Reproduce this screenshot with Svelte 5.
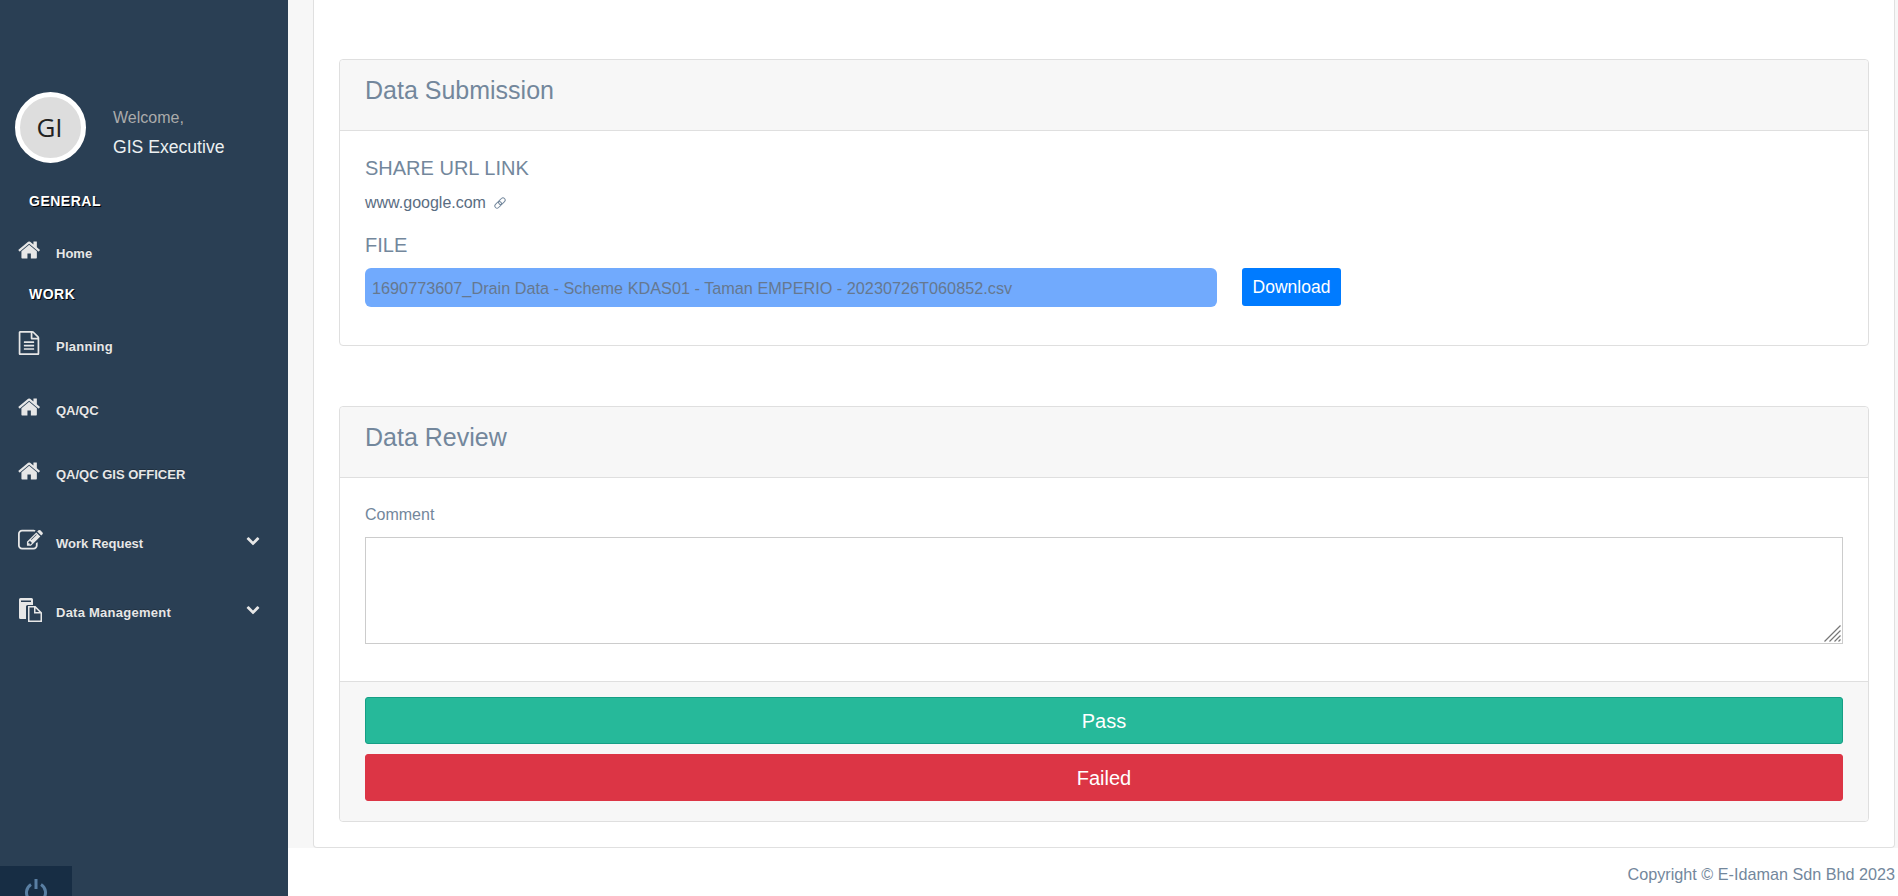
<script>
  const home = 'M1408 992v480q0 26-19 45t-45 19h-384v-384h-256v384h-384q-26 0-45-19t-19-45v-480q0-1 .5-3t.5-3l575-474 575 474q1 2 1 6zm223-69l-62 74q-8 9-21 11h-3q-13 0-21-7l-692-577-692 577q-12 8-24 7-13-2-21-11l-62-74q-8-10-7-23.5t11-21.5l719-599q32-26 76-26t76 26l244 204v-195q0-14 9-23t23-9h192q14 0 23 9t9 23v408l219 182q10 8 11 21.5t-7 23.5z';
  const file = 'M1596 380q28 28 48 76t20 88v1152q0 40-28 68t-68 28h-1344q-40 0-68-28t-28-68v-1600q0-40 28-68t68-28h896q40 0 88 20t76 48zm-444-244v376h376q-10-29-22-41l-313-313q-12-12-41-22zm384 1528v-1024h-416q-40 0-68-28t-28-68v-416h-768v1536h1280zm-1024-864q0-14 9-23t23-9h704q14 0 23 9t9 23v64q0 14-9 23t-23 9h-704q-14 0-23-9t-9-23v-64zm736 224q14 0 23 9t9 23v64q0 14-9 23t-23 9h-704q-14 0-23-9t-9-23v-64q0-14 9-23t23-9h704zm0 256q14 0 23 9t9 23v64q0 14-9 23t-23 9h-704q-14 0-23-9t-9-23v-64q0-14 9-23t23-9h704z';
  const edit = 'M888 1184l116-116-152-152-116 116v56h96v96h56zm440-720q-16-16-33 1l-350 350q-17 17-1 33t33-1l350-350q17-17 1-33zm80 594v190q0 119-84.5 203.5t-203.5 84.5h-832q-119 0-203.5-84.5t-84.5-203.5v-832q0-119 84.5-203.5t203.5-84.5h832q63 0 117 25 15 7 18 23 3 17-9 29l-49 49q-14 14-32 8-23-6-45-6h-832q-66 0-113 47t-47 113v832q0 66 47 113t113 47h832q66 0 113-47t47-113v-126q0-13 9-22l64-64q15-15 35-7t20 29zm-96-738l288 288-672 672h-288v-288zm444 132l-92 92-288-288 92-92q28-28 68-28t68 28l152 152q28 28 28 68t-28 68z';
  const chevron = 'M1683 808l-742 741q-19 19-45 19t-45-19l-742-741q-19-19-19-45.5t19-45.5l166-165q19-19 45-19t45 19l531 531 531-531q19-19 45-19t45 19l166 165q19 19 19 45.5t-19 45.5z';
</script>

<div class="layout">
  <aside class="sidebar">
    <div class="profile">
      <div class="avatar">GI</div>
      <div class="who">
        <span class="welcome">Welcome,</span>
        <span class="name">GIS Executive</span>
      </div>
    </div>

    <h3 class="general">General</h3>
    <a class="item home"><svg class="ic-home" viewBox="0 0 1792 1792"><path d={home} /></svg><span>Home</span></a>

    <h3 class="work">Work</h3>
    <a class="item planning"><svg class="ic-file" viewBox="0 0 1792 1792"><path d={file} /></svg><span class="wide">Planning</span></a>
    <a class="item qa"><svg class="ic-home" viewBox="0 0 1792 1792"><path d={home} /></svg><span>QA/QC</span></a>
    <a class="item qa"><svg class="ic-home" viewBox="0 0 1792 1792"><path d={home} /></svg><span>QA/QC GIS OFFICER</span></a>
    <a class="item sub">
      <svg class="ic-edit" viewBox="0 0 1792 1792"><path d={edit} /></svg><span>Work Request</span>
      <svg class="chev" viewBox="0 0 1792 1792"><path d={chevron} /></svg>
    </a>
    <a class="item sub">
      <svg class="ic-docs" viewBox="0 0 24 24">
        <path d="M1 1.500A1.500 1.500 0 0 1 2.500 0h11A1.500 1.500 0 0 1 15 1.500V7H9.500A1.500 1.500 0 0 0 8 8.500V21H2.500A1.500 1.500 0 0 1 1 19.500ZM3 2.500V4h10V2.500Z" fill-rule="evenodd" />
        <path d="M10 8h7.500L24 14.500V24H10Zm1.500 1.500v13h11v-7h-6.500V9.500Zm6 .8v3.700h3.700Z" fill-rule="evenodd" />
      </svg><span class="wide">Data Management</span>
      <svg class="chev" viewBox="0 0 1792 1792"><path d={chevron} /></svg>
    </a>

    <div class="sidebar-footer">
      <svg viewBox="0 0 24 24"><path d="M7 6.500a9.500 9.500 0 1 0 10 0M12 1v10" /></svg>
    </div>
  </aside>

  <div class="main">
    <div class="content">
      <div class="panel">
        <section class="card first">
          <header class="card-head"><h3>Data Submission</h3></header>
          <div class="card-body sub-body">
            <h5>SHARE URL LINK</h5>
            <p class="link">www.google.com
              <svg viewBox="0 0 16 16"><g transform="rotate(-45 8 8)"><rect x="0.700" y="5.500" width="8.600" height="5" rx="2.500" /><rect x="6.700" y="5.500" width="8.600" height="5" rx="2.500" /></g></svg>
            </p>
            <h5>FILE</h5>
            <div class="file-row">
              <div class="file-name">1690773607_Drain Data - Scheme KDAS01 - Taman EMPERIO - 20230726T060852.csv</div>
              <button class="download">Download</button>
            </div>
          </div>
        </section>

        <section class="card second">
          <header class="card-head"><h3>Data Review</h3></header>
          <div class="card-body review-body">
            <label for="comment">Comment</label>
            <div class="area">
              <textarea id="comment"></textarea>
              <svg class="grip" viewBox="0 0 17 17"><path d="M0.500 16.500 16.500 0.500M5.500 16.500 16.500 5.500M10.500 16.500 16.500 10.500M14.500 16.500 16.500 14.500" /></svg>
            </div>
          </div>
          <footer class="card-foot">
            <button class="act pass">Pass</button>
            <button class="act fail">Failed</button>
          </footer>
        </section>
      </div>
    </div>
    <div class="copyright">Copyright © E-Idaman Sdn Bhd 2023</div>
  </div>
</div>

<style>
  :global(body) {
    margin: 0;
    background: #fff;
    font-family: "Liberation Sans", Arial, sans-serif;
    color: #73879c;
  }
  .layout {
    display: flex;
    height: 896px;
    overflow: hidden;
  }

  .sidebar {
    width: 288px;
    flex-shrink: 0;
    background: #2a3f54;
    color: #e7e7e7;
    display: flex;
    flex-direction: column;
    overflow: hidden;
  }
  .profile {
    display: flex;
    margin: 92px 0 0 15px;
    height: 71px;
  }
  .avatar {
    width: 71px;
    height: 71px;
    box-sizing: border-box;
    border-radius: 50%;
    border: 5px solid #fff;
    background: #ddd;
    color: #222;
    font: 400 26px/61px "Open Sans", sans-serif;
    text-align: center;
    padding-right: 2px;
  }
  .who {
    display: flex;
    flex-direction: column;
    margin-left: 27px;
    padding-top: 16px;
  }
  .welcome { font-size: 16px; line-height: 20px; color: #ababab; }
  .name { font-size: 17.600px; line-height: 22px; margin-top: 8px; color: #ecf0f1; }

  h3.general, h3.work {
    margin: 0;
    font-size: 14px;
    line-height: 15px;
    font-weight: bold;
    letter-spacing: .5px;
    text-transform: uppercase;
    color: #fff;
    text-shadow: 1px 1px #000;
  }
  h3.general { margin: 31px 0 0 29px; }
  h3.work { margin: 14px 0 0 29px; }

  .item {
    display: flex;
    align-items: center;
    position: relative;
    height: 64px;
    font-size: 13px;
    color: #e7e7e7;
    font-weight: bold;
    text-shadow: rgba(0, 0, 0, .25) 0 -1px 0;
  }
  .item > span { position: absolute; left: 56px; }
  .item > span.wide { letter-spacing: .25px; }
  .item svg { fill: #e7e7e7; }
  .item.home { height: 40px; margin-top: 24px; }
  .item.planning { margin-top: 12px; }
  .item.sub { height: 69px; }
  .item.sub:nth-last-of-type(2) { margin-top: 3px; }
  .ic-home { width: 24px; height: 24px; margin: -6px 0 0 18px; }
  .ic-file { width: 24px; height: 24px; margin: -6px 0 0 17px; }
  .ic-edit { width: 25px; height: 25px; margin: -6px 0 0 18px; }
  .ic-docs { width: 24px; height: 24px; margin: -6px 0 0 18px; }
  .chev { position: absolute; right: 28px; top: 50%; width: 14px; height: 14px; margin-top: -11px; }

  .sidebar-footer {
    margin-top: auto;
    width: 72px;
    height: 30px;
    flex-shrink: 0;
    background: #172d44;
    overflow: hidden;
    display: flex;
    justify-content: center;
    padding-top: 12px;
    box-sizing: border-box;
  }
  .sidebar-footer svg {
    width: 24px;
    height: 24px;
    flex-shrink: 0;
    fill: none;
    stroke: #5a7fa3;
    stroke-width: 3;
  }

  .main {
    flex: 1;
    min-width: 0;
    display: flex;
    flex-direction: column;
  }
  .content {
    height: 848px;
    flex-shrink: 0;
    background: #f7f7f7;
    padding: 0 3px 0 25px;
    box-sizing: border-box;
  }
  .panel {
    height: 100%;
    box-sizing: border-box;
    background: #fff;
    border: 1px solid #e0e0e0;
    border-top: 0;
    border-radius: 0 0 4px 4px;
    padding: 59px 25px 0;
  }

  .card {
    border: 1px solid #dfdfdf;
    border-radius: 4px;
    background: #fff;
    box-sizing: border-box;
  }
  .card.first { height: 287px; }
  .card.second { height: 416px; margin-top: 60px; }
  .card-head {
    height: 71px;
    box-sizing: border-box;
    background: #f7f7f7;
    border-bottom: 1px solid #dfdfdf;
    border-radius: 4px 4px 0 0;
    padding: 0 25px 9px;
    display: flex;
    align-items: center;
  }
  .card-head h3 {
    margin: 0;
    font-size: 25px;
    font-weight: 400;
  }
  .card-body { padding: 0 25px; }
  .sub-body { padding-top: 25px; }
  h5 {
    margin: 0;
    font-size: 20px;
    line-height: 24px;
    font-weight: 400;
  }
  .link {
    margin: 12px 0 19px;
    font-size: 16px;
    line-height: 22px;
    color: #5a6d82;
    display: flex;
    align-items: center;
    gap: 7px;
  }
  .link svg {
    width: 14px;
    height: 14px;
    fill: none;
    stroke: #73879c;
    stroke-width: 1.100;
  }
  .file-row {
    display: flex;
    align-items: flex-start;
    margin-top: 11px;
  }
  .file-name {
    width: 852px;
    height: 39px;
    box-sizing: border-box;
    background: #71aafd;
    border-radius: 6px;
    color: #66788f;
    font-size: 16.250px;
    line-height: 39px;
    padding: 1px 0 0 7px;
  }
  .download {
    margin-left: 25px;
    width: 99px;
    height: 38px;
    border: 0;
    border-radius: 3px;
    background: #007bff;
    color: #fff;
    font: 17.500px "Liberation Sans", Arial, sans-serif;
    padding: 0;
  }

  .review-body { height: 203px; box-sizing: border-box; padding-top: 26px; }
  label {
    display: block;
    font-size: 16px;
    line-height: 22px;
  }
  .area {
    position: relative;
    margin-top: 11px;
  }
  textarea {
    display: block;
    width: 100%;
    height: 107px;
    box-sizing: border-box;
    border: 1px solid #ccc;
    background: #fff;
    outline: none;
    resize: none;
  }
  .grip {
    position: absolute;
    right: 2px;
    bottom: 2px;
    width: 17px;
    height: 17px;
    fill: none;
    stroke: #777;
    stroke-width: 1.200;
  }
  .card-foot {
    height: 140px;
    box-sizing: border-box;
    background: #f7f7f7;
    border-top: 1px solid #dfdfdf;
    border-radius: 0 0 4px 4px;
    padding: 15px 25px 0;
  }
  .act {
    display: block;
    width: 100%;
    height: 47px;
    box-sizing: border-box;
    border-radius: 3px;
    color: #fff;
    font: 20px "Liberation Sans", Arial, sans-serif;
    padding: 1px 0 0;
  }
  .pass { background: #26b99a; border: 1px solid #169f85; }
  .fail { background: #dc3545; border: 1px solid #dc3545; margin-top: 10px; }

  .copyright {
    flex: 1;
    display: flex;
    align-items: center;
    justify-content: flex-end;
    padding: 4px 3px 0 0;
    font-size: 16.200px;
  }
</style>
